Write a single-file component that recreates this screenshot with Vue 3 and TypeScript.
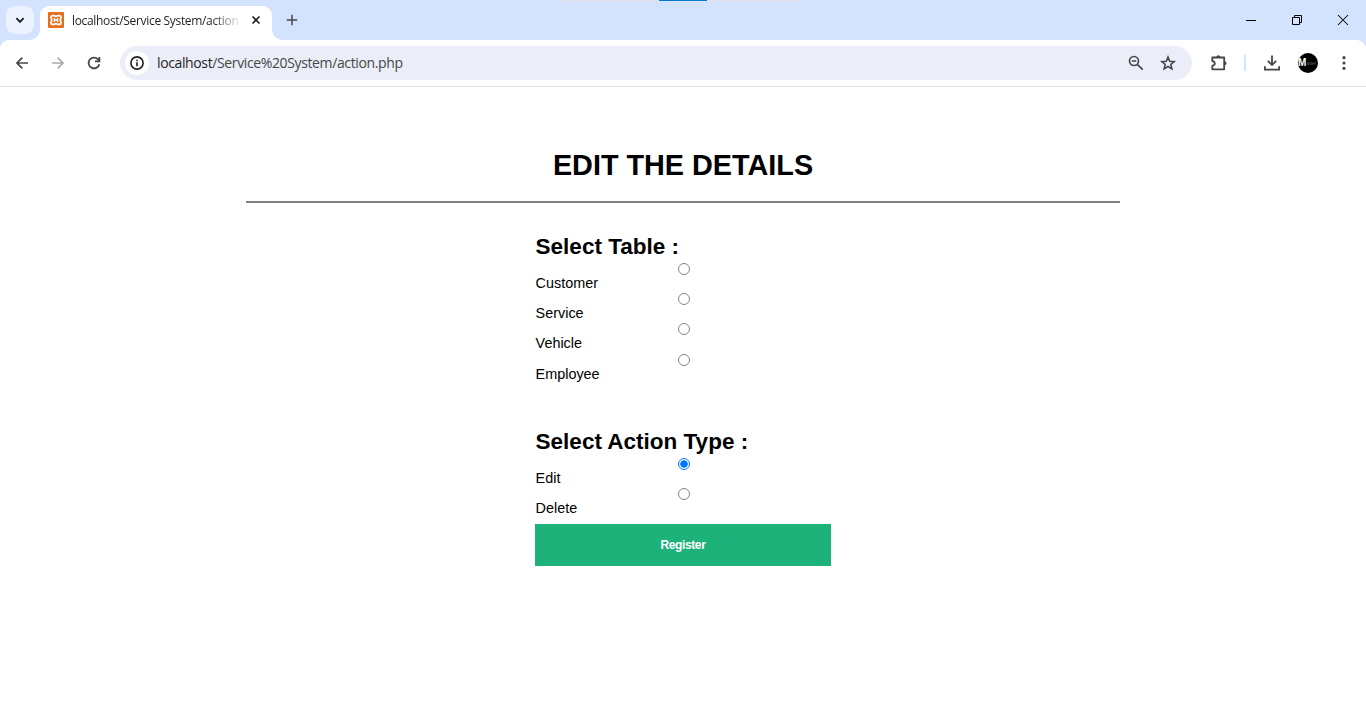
<script setup lang="ts">
import { ref } from 'vue'

interface Option {
  value: string
  label: string
}

const tables: Option[] = [
  { value: 'customer', label: 'Customer' },
  { value: 'service', label: 'Service' },
  { value: 'vehicle', label: 'Vehicle' },
  { value: 'employee', label: 'Employee' },
]
const actions: Option[] = [
  { value: 'edit', label: 'Edit' },
  { value: 'delete', label: 'Delete' },
]

const table = ref<string>('')
const action = ref<string>('edit')
</script>

<template>
  <div class="window">
    <header class="tabs">
      <div class="snap"><i></i></div>
      <button class="tab-search" aria-label="Search tabs">
        <svg width="28" height="28" viewBox="0 0 28 28"><path d="M10.400 12.200 14 15.800l3.600-3.600" fill="none" stroke="#1f1f1f" stroke-width="1.900" /></svg>
      </button>
      <div class="tab">
        <svg class="favicon" width="16" height="16" viewBox="0 0 16 16">
          <rect width="16" height="16" rx="1" fill="#e4701e" />
          <path d="M5 3.600h1.200c1 0 1.100.9 1.800.9s.8-.9 1.800-.9H11c1.500 0 2 .8 2 2 0 1.300-.8 1.400-.8 2.400s.8 1.100.8 2.400c0 1.200-.5 2-2 2H9.800c-1 0-1.100-.9-1.800-.9s-.8.9-1.800.9H5c-1.500 0-2-.8-2-2C3 9.100 3.800 9 3.800 8S3 6.900 3 5.600c0-1.200.5-2 2-2Z" fill="none" stroke="#fff" stroke-width="1.700" />
          <path d="M5.800 6.200 7 8l-1.200 1.800M10.200 6.200 9 8l1.200 1.800M7 8h2" fill="none" stroke="#fff" stroke-width="1.400" />
        </svg>
        <span class="tab-title">localhost/Service System/action</span>
        <svg class="tab-close" width="16" height="16" viewBox="0 0 16 16"><path d="m4.500 4.500 7 7m0-7-7 7" stroke="#1f1f1f" stroke-width="1.600" /></svg>
      </div>
      <svg class="new-tab" width="16" height="16" viewBox="0 0 16 16"><path d="M8 2.800v10.400M2.800 8h10.400" stroke="#474747" stroke-width="1.500" /></svg>
      <div class="controls">
        <svg width="46" height="40" viewBox="0 0 46 40"><path d="M18 20.500h10" stroke="#000" /></svg>
        <svg width="46" height="40" viewBox="0 0 46 40"><path d="M18.500 17.500h7v7h-7zM20.500 17.500v-2h7v7h-2" fill="none" stroke="#000" /></svg>
        <svg width="46" height="40" viewBox="0 0 46 40"><path d="m18 15 10 10m0-10L18 25" stroke="#000" stroke-width="1.050" /></svg>
      </div>
    </header>

    <nav class="toolbar">
      <svg class="back" width="20" height="20" viewBox="0 0 20 20"><path d="M16 10H5.200M10.300 4.700 5 10l5.300 5.300" fill="none" stroke="#474747" stroke-width="1.700" /></svg>
      <svg class="forward" width="20" height="20" viewBox="0 0 20 20"><path d="M4 10h10.800M9.700 4.700 15 10l-5.300 5.300" fill="none" stroke="#ababab" stroke-width="1.700" /></svg>
      <svg class="reload" width="20" height="20" viewBox="0 0 20 20"><path d="M15.300 11.200A5.400 5.400 0 1 1 14 6.300l1.500 1.600M15.400 4v4.300h-4.500" fill="none" stroke="#474747" stroke-width="1.800" /></svg>
      <div class="omnibox">
        <span class="site-info">
          <svg width="24" height="24" viewBox="0 0 24 24"><circle cx="12" cy="12" r="6.100" fill="none" stroke="#1f1f1f" stroke-width="1.600" /><path d="M12 11.200V15.200M12 8.700v1.500" stroke="#1f1f1f" stroke-width="1.600" /></svg>
        </span>
        <span class="url"><b>localhost</b>/Service%20System/action.php</span>
        <svg class="zoom-icon" width="20" height="20" viewBox="0 0 20 20"><circle cx="8" cy="8" r="4.500" fill="none" stroke="#474747" stroke-width="1.700" /><path d="M5.800 8h4.400M11.300 11.300l5.400 5.400" stroke="#474747" stroke-width="1.700" /></svg>
        <svg class="star" width="20" height="20" viewBox="0 0 20 20"><path d="m10 4.100 1.700 4.100 4.500.4-3.400 2.900 1.100 4.400-3.900-2.400-3.900 2.400 1.100-4.400-3.400-2.900 4.500-.4Z" fill="none" stroke="#474747" stroke-width="1.600" /></svg>
      </div>
      <svg class="extensions" width="20" height="20" viewBox="0 0 20 20">
        <path d="M4 4.500h11.200v11.800H3.300v-3.700q2.500-.3 2.500-2.200T3.300 8.200V4.500Z" fill="none" stroke="#474747" stroke-width="1.800" stroke-linejoin="round" />
        <path d="M7.300 4.300a2 2 0 0 1 4 0ZM15.500 8.300a2 2 0 0 1 0 4Z" fill="#474747" />
      </svg>
      <i class="divider"></i>
      <svg class="download" width="20" height="20" viewBox="0 0 20 20"><path d="M10 2.500v9.300M5.800 7.900l4.200 4.200 4.200-4.200M2.900 13.300v3.400h14.200v-3.400" fill="none" stroke="#474747" stroke-width="1.800" /></svg>
      <span class="avatar"><b>M</b><small>aster</small></span>
      <svg class="more" width="20" height="20" viewBox="0 0 20 20" fill="#474747"><circle cx="10" cy="4.700" r="1.600" /><circle cx="10" cy="10" r="1.600" /><circle cx="10" cy="15.300" r="1.600" /></svg>
    </nav>

    <main class="page">
      <h1>EDIT THE DETAILS</h1>
      <form class="form" @submit.prevent>
        <h2 class="table-heading">Select Table :</h2>
        <label v-for="o in tables" :key="o.value" class="option">
          <input v-model="table" type="radio" name="table" :value="o.value" />
          <span>{{ o.label }}</span>
        </label>
        <h2 class="action-heading">Select Action Type :</h2>
        <label v-for="o in actions" :key="o.value" class="option">
          <input v-model="action" type="radio" name="action" :value="o.value" />
          <span>{{ o.label }}</span>
        </label>
        <button class="submit" type="submit">Register</button>
      </form>
    </main>
  </div>
</template>

<style>
body {
  margin: 0;
  overflow: hidden;
}
</style>

<style scoped>
* {
  box-sizing: border-box;
}
svg {
  display: block;
  flex: none;
}
.window {
  width: 1366px;
  height: 728px;
  overflow: hidden;
  background: #d3e3fd;
  font-family: "Liberation Sans", Arial, sans-serif;
}
.tabs {
  position: relative;
  display: flex;
  height: 40px;
  padding-left: 6px;
}
.snap {
  position: absolute;
  top: 0;
  left: 563px;
  width: 241px;
  height: 1px;
  background: #e3e3e3;
}
.snap i {
  display: block;
  width: 48px;
  height: 1px;
  margin-left: 96px;
  background: #0078d7;
}
.tab-search {
  width: 28px;
  height: 28px;
  margin: 6px 6px 0 0;
  padding: 0;
  border: 0;
  border-radius: 9px;
  background: #ecf3fe;
}
.tab {
  position: relative;
  display: flex;
  width: 232px;
  height: 34px;
  margin-top: 6px;
  padding-left: 8px;
  border-radius: 9px 9px 0 0;
  background: #fff;
}
.tab::before,
.tab::after {
  content: "";
  position: absolute;
  bottom: 0;
  width: 10px;
  height: 10px;
}
.tab::before {
  left: -10px;
  background: radial-gradient(circle at 0 0, transparent 9.5px, #fff 10px);
}
.tab::after {
  right: -10px;
  background: radial-gradient(circle at 100% 0, transparent 9.5px, #fff 10px);
}
.favicon {
  margin-top: 6px;
}
.tab-title {
  width: 168px;
  height: 20px;
  margin: 5px 0 0 8px;
  white-space: nowrap;
  color: #1f1f1f;
  font: 12px/20px "Open Sans", sans-serif;
  letter-spacing: -0.33px;
  mask-image: linear-gradient(90deg, #000 140px, transparent 170px);
}
.tab-close {
  margin: 6px 0 0 8px;
}
.new-tab {
  margin: 12px 0 0 12px;
}
.controls {
  display: flex;
  margin-left: auto;
}
.toolbar {
  display: flex;
  align-items: center;
  height: 47px;
  padding: 0 12px 1px;
  border-bottom: 1px solid #e0e0e0;
  border-radius: 9px 9px 0 0;
  background: #fff;
}
.forward,
.reload {
  margin-left: 16px;
}
.omnibox {
  display: flex;
  align-items: center;
  width: 1072px;
  height: 34px;
  margin-left: 16px;
  padding-left: 5px;
  border-radius: 17px;
  background: #ebeef8;
}
.site-info {
  border-radius: 50%;
  background: #fff;
}
.url {
  margin-left: 8px;
  color: #474747;
  font: 14px/20px "Open Sans", sans-serif;
  letter-spacing: -0.375px;
}
.url b {
  color: #1f1f1f;
  font-weight: 400;
}
.zoom-icon {
  margin-left: auto;
}
.star {
  margin: 0 14px 0 12px;
}
.extensions {
  margin-left: 17px;
}
.divider {
  width: 2px;
  height: 16px;
  margin-left: 15px;
  background: #d3e3fd;
}
.download {
  margin-left: 16px;
}
.avatar {
  display: flex;
  align-items: center;
  width: 20px;
  height: 20px;
  margin-left: 16px;
  overflow: hidden;
  border-radius: 50%;
  background: #000;
  color: #fff;
}
.avatar b {
  font-size: 10px;
  line-height: 20px;
}
.avatar small {
  color: #555;
  font-size: 5px;
  letter-spacing: -0.3px;
}
.more {
  margin-left: 16px;
}
.page {
  height: 641px;
  padding: 59px 246px 0;
  background: #fff;
  color: #000;
}
h1 {
  height: 57px;
  margin: 0;
  border-bottom: 2px solid #808080;
  text-align: center;
  font-size: 28.8px;
  line-height: 38px;
}
.form {
  width: 296px;
  margin: 0 auto;
}
h2 {
  margin: 0 0 -1px;
  padding-left: 0.6px;
  font-size: 22.5px;
  line-height: 26px;
  white-space: nowrap;
}
.table-heading {
  padding-top: 31px;
}
.action-heading {
  padding-top: 48.9px;
}
.option {
  display: block;
  height: 30.2px;
  padding-top: 4px;
}
.option input {
  appearance: none;
  display: block;
  width: 12px;
  height: 12px;
  margin: 0 auto;
  border: 1px solid #858585;
  border-radius: 50%;
  background: #fff;
  position: relative;
  left: 1px;
}
.option input:checked {
  border-color: #0075ff;
  background: radial-gradient(circle, #0075ff 3.4px, #fff 4px);
}
.option span {
  display: block;
  padding-left: 0.6px;
  font-size: 14.4px;
  line-height: 17px;
}
.submit {
  display: block;
  width: 296px;
  height: 42px;
  margin-top: 10px;
  padding: 0;
  border: 0;
  background: #1eb27b;
  color: #fff;
  font: 700 12px/42px "Liberation Sans", Arial, sans-serif;
  letter-spacing: -0.4px;
}
</style>
